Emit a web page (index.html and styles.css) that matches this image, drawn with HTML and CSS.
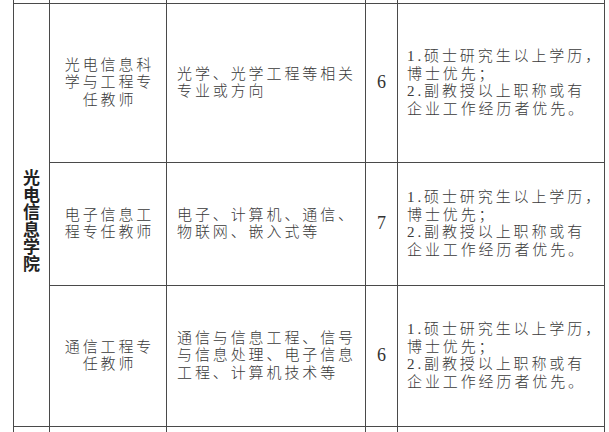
FILE: index.html
```html
<!DOCTYPE html>
<html lang="zh-CN">
<head>
<meta charset="utf-8">
<title>招聘岗位</title>
<link rel="stylesheet" href="styles.css">
</head>
<body>
<table class="sheet">
  <colgroup>
    <col class="c-college">
    <col class="c-post">
    <col class="c-major">
    <col class="c-num">
    <col class="c-req">
  </colgroup>
  <tr class="r-top">
    <td></td><td></td><td></td><td></td><td></td>
  </tr>
  <tr class="r1">
    <td class="college" rowspan="3"><span class="college-name">光电信息学院</span></td>
    <td class="post">光电信息科<br>学与工程专<br>任教师</td>
    <td class="major">光学、光学工程等相关<br>专业或方向</td>
    <td class="num">6</td>
    <td class="req"><span class="lat">1.</span>硕士研究生以上学历，<br>博士优先；<br><span class="lat">2.</span>副教授以上职称或有<br>企业工作经历者优先。</td>
  </tr>
  <tr class="r2">
    <td class="post">电子信息工<br>程专任教师</td>
    <td class="major">电子、计算机、通信、<br>物联网、嵌入式等</td>
    <td class="num">7</td>
    <td class="req"><span class="lat">1.</span>硕士研究生以上学历，<br>博士优先；<br><span class="lat">2.</span>副教授以上职称或有<br>企业工作经历者优先。</td>
  </tr>
  <tr class="r3">
    <td class="post">通信工程专<br>任教师</td>
    <td class="major">通信与信息工程、信号<br>与信息处理、电子信息<br>工程、计算机技术等</td>
    <td class="num">6</td>
    <td class="req"><span class="lat">1.</span>硕士研究生以上学历，<br>博士优先；<br><span class="lat">2.</span>副教授以上职称或有<br>企业工作经历者优先。</td>
  </tr>
  <tr class="r-bot">
    <td></td><td></td><td></td><td></td><td></td>
  </tr>
</table>
</body>
</html>
```
FILE: styles.css
```css
html, body {
  margin: 0;
  padding: 0;
  background: #ffffff;
  overflow: hidden;
  width: 609px;
  height: 432px;
}

.sheet {
  margin-left: 13px;
  border-collapse: collapse;
  table-layout: fixed;
  width: 591px;
  font-family: "Liberation Serif", "Noto Sans CJK SC", serif;
  color: #3a3a3a;
}

.c-college { width: 36px; }
.c-post { width: 117px; }
.c-major { width: 199px; }
.c-num { width: 32px; }
.c-req { width: 207px; }

.sheet td {
  border: 1px solid #4a4a4a;
  padding: 0;
  vertical-align: middle;
  font-size: 15px;
  line-height: 17.5px;
  letter-spacing: 2.9px;
  font-weight: 300;
  white-space: nowrap;
  overflow: hidden;
}

.sheet .r-top td {
  border-top: 0;
  height: 3px;
}

.sheet .r-bot td {
  border-bottom: 0;
  height: 20px;
}

.sheet .r1 td { height: 158px; }
.sheet .r2 td { height: 122px; }
.sheet .r3 td { height: 140px; }

.sheet td.college {
  text-align: center;
  padding-top: 16px;
}

.college-name {
  display: inline-block;
  writing-mode: vertical-rl;
  font-family: "Noto Sans CJK SC", sans-serif;
  font-size: 17px;
  font-weight: 700;
  letter-spacing: 0.2px;
  line-height: 17px;
  color: #222222;
}

.lat {
  font-family: "Liberation Serif", serif;
}

.sheet td.post {
  text-align: center;
  padding-left: 3px;
}

.sheet td.major {
  text-align: left;
  padding-left: 10px;
}

.sheet td.num {
  text-align: center;
  font-size: 18px;
  letter-spacing: 0;
  font-weight: 400;
  color: #333333;
}

.sheet td.req {
  text-align: left;
  padding-left: 9px;
}
```
